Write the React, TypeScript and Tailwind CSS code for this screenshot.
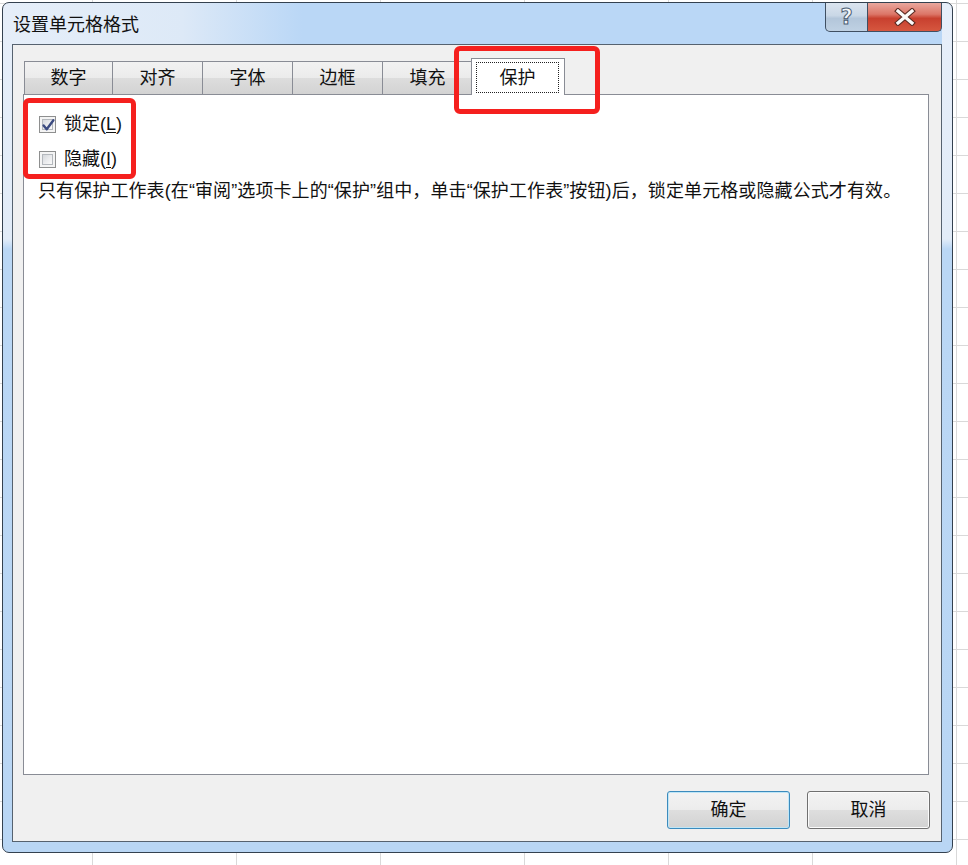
import React from "react";

const FONT = "font-['Liberation_Sans','Noto_Sans_CJK_SC',sans-serif]";

const tabs = ["数字", "对齐", "字体", "边框", "填充"];

function Checkbox({ checked }: { checked?: boolean }) {
  return (
    <span className="relative block w-[17px] h-[17px] border border-[#8e8f8f] bg-[#f4f4f4] p-[2px]">
      <span className="block w-full h-full border border-[#b4b8bd] bg-[linear-gradient(135deg,#d5d8dc_0%,#e9eaec_50%,#fafafa_100%)]" />
      {checked && (
        <svg className="absolute inset-0" width="17" height="17" viewBox="0 0 17 17">
          <path d="M3.6 8.4 L6.7 12.2 L13.4 3.2" fill="none" stroke="#3b4a80" strokeWidth="2.4" strokeLinejoin="round" strokeLinecap="round" />
        </svg>
      )}
    </span>
  );
}

function DialogButton({ label, primary }: { label: string; primary?: boolean }) {
  return (
    <button
      className={
        primary
          ? "w-[123px] h-[38px] rounded-[3px] border border-[#3c8bbd] shadow-[inset_0_0_0_1px_#bfe6f7] bg-[linear-gradient(to_bottom,#f3f3f3_0%,#ececec_50%,#dedede_50%,#d2d2d2_100%)] text-[18px] leading-[22px] text-[#111]"
          : "w-[123px] h-[38px] rounded-[3px] border border-[#707070] shadow-[inset_0_0_0_1px_#fbfbfb] bg-[linear-gradient(to_bottom,#f3f3f3_0%,#ececec_50%,#dedede_50%,#d2d2d2_100%)] text-[18px] leading-[22px] text-[#111]"
      }
    >
      {label}
    </button>
  );
}

export default function App() {
  return (
    <div
      className={`${FONT} relative w-[968px] h-[865px] overflow-hidden bg-white bg-[linear-gradient(to_right,#d9d9d9_1px,transparent_1px),linear-gradient(to_bottom,#d9d9d9_1px,transparent_1px)] [background-size:144px_38px] [background-position:92px_3px] pt-[2px] pl-[2px]`}
    >
      {/* Dialog window */}
      <div className="flex flex-col w-[951px] h-[851px] rounded-[7px] border border-[#34414f] bg-[linear-gradient(to_bottom,#e6eef9_0px,#e2ecf8_236px,#bad7f5_246px,#b9d6f4_100%)] pl-[9px] pr-[10px] pb-[10px]">
        {/* Title bar */}
        <div className="flex justify-between h-[41px] bg-[linear-gradient(to_right,#e5eef9_0px,#dde9f7_170px,#bad7f6_290px,#bad7f6_100%)]">
          <div className="pt-[11px] pl-[1px] text-[18px] leading-[22px] text-[#111]">设置单元格格式</div>
          <div className="flex h-[29px]">
            <div className="flex items-center justify-center w-[43px] h-full border border-t-0 border-[#3f4f62] rounded-bl-[5px] bg-[linear-gradient(to_bottom,#dbe5f0_0%,#c9d7e6_45%,#b3c6da_55%,#bfd1e3_100%)]">
              <span className="font-['DejaVu_Sans',sans-serif] font-bold text-[21px] leading-[20px] text-[#f4f7fa] [-webkit-text-stroke:1px_#4b5d72]">?</span>
            </div>
            <div className="flex items-center justify-center w-[74px] h-full border border-t-0 border-l-0 border-[#3f4f62] rounded-br-[5px] bg-[linear-gradient(to_bottom,#e9a79d_0%,#dc7668_40%,#c8402f_55%,#d6573f_100%)]">
              <svg width="22" height="18" viewBox="0 0 22 18">
                <path d="M4 3 L18 15 M18 3 L4 15" stroke="#5a2a22" strokeWidth="5.4" strokeLinecap="square" />
                <path d="M4 3 L18 15 M18 3 L4 15" stroke="#fbfbfb" strokeWidth="3.2" strokeLinecap="square" />
              </svg>
            </div>
          </div>
        </div>

        {/* Client area */}
        <div className="flex-1 flex flex-col border border-[#56626f] bg-[#f0f0f0]">
          {/* Tab strip */}
          <div className="flex items-end h-[36px] mt-[13px] pl-[11px]">
            {tabs.map((t, i) => (
              <div
                key={t}
                className={`${i === 0 ? "w-[89px]" : "w-[91px] -ml-px"} flex items-center justify-center h-[33px] border border-b-0 border-[#898c95] bg-[linear-gradient(to_bottom,#f2f2f2_0%,#ebebeb_50%,#dddddd_50%,#d3d3d3_100%)] text-[18px] leading-[22px] text-[#111]`}
              >
                {t}
              </div>
            ))}
            <div className="relative z-10 flex flex-col w-[94px] h-[37px] -ml-[2px] -mb-px border border-b-0 border-[#898c95] bg-white pt-[3px] pl-[4px] pr-[5px] pb-[2px]">
              <div className="flex-1 flex items-center justify-center border border-dotted border-[#222] text-[18px] leading-[22px] text-[#111]">
                保护
              </div>
            </div>
          </div>

          {/* Tab panel */}
          <div className="ml-[10px] w-[906px] h-[681px] border border-[#898c95] bg-white pt-[17px] pl-[15px] text-[18px] leading-[24px] text-[#111]">
            <div className="flex flex-col gap-[11px]">
              <label className="flex items-center gap-[8px] h-[24px]">
                <Checkbox checked />
                <span>
                  锁定(<span className="underline underline-offset-2">L</span>)
                </span>
              </label>
              <label className="flex items-center gap-[8px] h-[24px]">
                <Checkbox />
                <span>
                  隐藏(<span className="underline underline-offset-2">I</span>)
                </span>
              </label>
            </div>
            <p className="mt-[8px] -ml-px tracking-[0.1px]">
              只有保护工作表(在“审阅”选项卡上的“保护”组中，单击“保护工作表”按钮)后，锁定单元格或隐藏公式才有效。
            </p>
          </div>

          {/* Buttons */}
          <div className="flex justify-end gap-[17px] mt-[16px] pr-[11px]">
            <DialogButton label="确定" primary />
            <DialogButton label="取消" />
          </div>
        </div>
      </div>

      {/* Red annotation boxes */}
      <div className="absolute left-[454px] top-[46px] w-[146px] h-[68px] rounded-[6px] border-[5px] border-[#f5201e]" />
      <div className="absolute left-[23px] top-[98px] w-[113px] h-[81px] rounded-[6px] border-[5px] border-[#f5201e]" />
    </div>
  );
}
